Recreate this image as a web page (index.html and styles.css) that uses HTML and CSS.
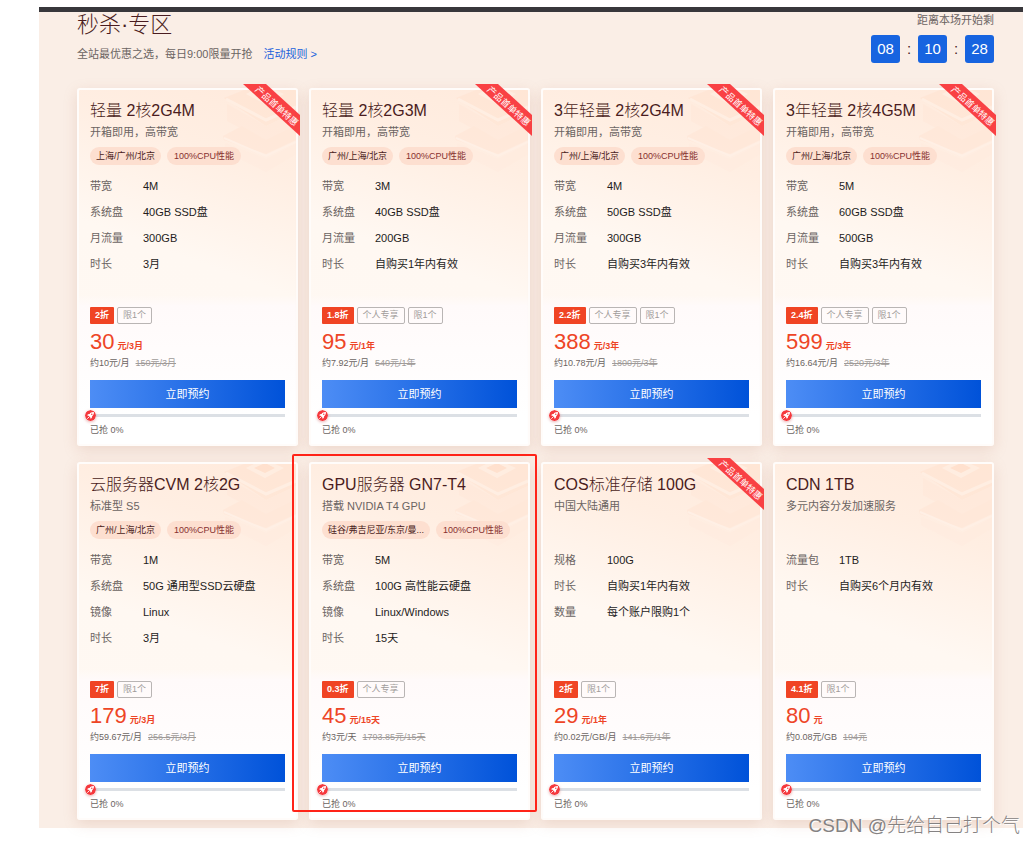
FILE: index.html
```html
<!DOCTYPE html>
<html lang="zh-CN">
<head>
<meta charset="utf-8">
<title>秒杀·专区</title>
<link rel="stylesheet" href="styles.css">
</head>
<body>
<svg class="defs" aria-hidden="true">
  <symbol id="art" viewBox="0 0 74 84">
    <path d="M2 8 22 0h52v22L44 36Z" fill="#ffe3d1"/>
    <path d="M4 9 44 30 74 17" fill="none" stroke="#fff1e6" stroke-width="3"/>
    <path d="M24 4 42-5 62 4 43 14Z" fill="#fff0e4"/>
    <path d="M32 4 43-1 53 4 43 9Z" fill="#ffd9c2"/>
    <path d="M5 14v17l39 21 30-14V22L44 36Z" fill="#ffe8d9"/>
    <path d="M1 46 20 36l24 14 30-15v15L44 64 2 50Z" fill="#ffe5d5"/>
    <path d="M3 53 44 69 74 54v10L44 82 3 61Z" fill="#ffebde" opacity=".7"/>
    <path d="M2 48 44 66 74 52" fill="none" stroke="#fff2e9" stroke-width="2"/>
  </symbol>
  <symbol id="rocket" viewBox="0 0 12 12">
    <circle cx="6" cy="6" r="6" fill="#f5383d"/>
    <path d="M9.7 2.3C7.5 2.1 6 3 5 4.3L3.2 4.6 2.4 6l1.4.2 2 2 .2 1.4 1.4-.8.3-1.8c1.3-1 2.2-2.5 2-4.700Z" fill="#fff"/>
    <path d="m2.500 9.500 1.900-1.900" stroke="#fff" stroke-width="1"/>
    <circle cx="7.400" cy="4.600" r=".8" fill="#f5383d"/>
  </symbol>
  <symbol id="ribbon" viewBox="0 0 57 52">
    <path d="M0 0h23l34 31v21Z" fill="#f94144"/>
    <text class="ribbon-text" transform="translate(33 23) rotate(42)" text-anchor="middle" y="2">产品首单特惠</text>
  </symbol>
</svg>
<main class="zone">
  <header class="head">
    <div>
      <h1>秒杀·专区</h1>
      <p class="intro">全站最优惠之选，每日9:00限量开抢<a href="#rules">活动规则 &gt;</a></p>
    </div>
    <div class="timer">
      <p>距离本场开始剩</p>
      <div class="clock"><b>08</b><i>:</i><b>10</b><i>:</i><b>28</b></div>
    </div>
  </header>

  <section class="grid">
    <article class="card">
      <svg class="art"><use href="#art"/></svg><svg class="ribbon"><use href="#ribbon"/></svg>
      <h2>轻量 2核2G4M</h2><p class="sub">开箱即用，高带宽</p>
      <div class="tags"><span>上海/广州/北京</span><span class="cpu">100%CPU性能</span></div>
      <dl><dt>带宽</dt><dd>4M</dd><dt>系统盘</dt><dd>40GB SSD盘</dd><dt>月流量</dt><dd>300GB</dd><dt>时长</dt><dd>3月</dd></dl>
      <div class="badges"><b>2折</b><span>限1个</span></div>
      <p class="price"><strong>30</strong>元/3月</p>
      <p class="about">约10元/月<del>150元/3月</del></p>
      <button type="button">立即预约</button>
      <div class="bar"><svg><use href="#rocket"/></svg></div><p class="sold">已抢 0%</p>
    </article>

    <article class="card">
      <svg class="art"><use href="#art"/></svg><svg class="ribbon"><use href="#ribbon"/></svg>
      <h2>轻量 2核2G3M</h2><p class="sub">开箱即用，高带宽</p>
      <div class="tags"><span>广州/上海/北京</span><span class="cpu">100%CPU性能</span></div>
      <dl><dt>带宽</dt><dd>3M</dd><dt>系统盘</dt><dd>40GB SSD盘</dd><dt>月流量</dt><dd>200GB</dd><dt>时长</dt><dd>自购买1年内有效</dd></dl>
      <div class="badges"><b>1.8折</b><span>个人专享</span><span>限1个</span></div>
      <p class="price"><strong>95</strong>元/1年</p>
      <p class="about">约7.92元/月<del>540元/1年</del></p>
      <button type="button">立即预约</button>
      <div class="bar"><svg><use href="#rocket"/></svg></div><p class="sold">已抢 0%</p>
    </article>

    <article class="card">
      <svg class="art"><use href="#art"/></svg><svg class="ribbon"><use href="#ribbon"/></svg>
      <h2>3年轻量 2核2G4M</h2><p class="sub">开箱即用，高带宽</p>
      <div class="tags"><span>广州/上海/北京</span><span class="cpu">100%CPU性能</span></div>
      <dl><dt>带宽</dt><dd>4M</dd><dt>系统盘</dt><dd>50GB SSD盘</dd><dt>月流量</dt><dd>300GB</dd><dt>时长</dt><dd>自购买3年内有效</dd></dl>
      <div class="badges"><b>2.2折</b><span>个人专享</span><span>限1个</span></div>
      <p class="price"><strong>388</strong>元/3年</p>
      <p class="about">约10.78元/月<del>1800元/3年</del></p>
      <button type="button">立即预约</button>
      <div class="bar"><svg><use href="#rocket"/></svg></div><p class="sold">已抢 0%</p>
    </article>

    <article class="card">
      <svg class="art"><use href="#art"/></svg><svg class="ribbon"><use href="#ribbon"/></svg>
      <h2>3年轻量 2核4G5M</h2><p class="sub">开箱即用，高带宽</p>
      <div class="tags"><span>广州/上海/北京</span><span class="cpu">100%CPU性能</span></div>
      <dl><dt>带宽</dt><dd>5M</dd><dt>系统盘</dt><dd>60GB SSD盘</dd><dt>月流量</dt><dd>500GB</dd><dt>时长</dt><dd>自购买3年内有效</dd></dl>
      <div class="badges"><b>2.4折</b><span>个人专享</span><span>限1个</span></div>
      <p class="price"><strong>599</strong>元/3年</p>
      <p class="about">约16.64元/月<del>2520元/3年</del></p>
      <button type="button">立即预约</button>
      <div class="bar"><svg><use href="#rocket"/></svg></div><p class="sold">已抢 0%</p>
    </article>

    <article class="card">
      <svg class="art"><use href="#art"/></svg>
      <h2>云服务器CVM 2核2G</h2><p class="sub">标准型 S5</p>
      <div class="tags"><span>广州/上海/北京</span><span class="cpu">100%CPU性能</span></div>
      <dl><dt>带宽</dt><dd>1M</dd><dt>系统盘</dt><dd>50G 通用型SSD云硬盘</dd><dt>镜像</dt><dd>Linux</dd><dt>时长</dt><dd>3月</dd></dl>
      <div class="badges"><b>7折</b><span>限1个</span></div>
      <p class="price"><strong>179</strong>元/3月</p>
      <p class="about">约59.67元/月<del>256.5元/3月</del></p>
      <button type="button">立即预约</button>
      <div class="bar"><svg><use href="#rocket"/></svg></div><p class="sold">已抢 0%</p>
    </article>

    <article class="card marked">
      <svg class="art"><use href="#art"/></svg>
      <h2>GPU服务器 GN7-T4</h2><p class="sub">搭载 NVIDIA T4 GPU</p>
      <div class="tags"><span>硅谷/弗吉尼亚/东京/曼...</span><span class="cpu">100%CPU性能</span></div>
      <dl><dt>带宽</dt><dd>5M</dd><dt>系统盘</dt><dd>100G 高性能云硬盘</dd><dt>镜像</dt><dd>Linux/Windows</dd><dt>时长</dt><dd>15天</dd></dl>
      <div class="badges"><b>0.3折</b><span>个人专享</span></div>
      <p class="price"><strong>45</strong>元/15天</p>
      <p class="about">约3元/天<del>1793.85元/15天</del></p>
      <button type="button">立即预约</button>
      <div class="bar"><svg><use href="#rocket"/></svg></div><p class="sold">已抢 0%</p>
    </article>

    <article class="card">
      <svg class="art"><use href="#art"/></svg><svg class="ribbon"><use href="#ribbon"/></svg>
      <h2>COS标准存储 100G</h2><p class="sub">中国大陆通用</p>
      <div class="tags"></div>
      <dl><dt>规格</dt><dd>100G</dd><dt>时长</dt><dd>自购买1年内有效</dd><dt>数量</dt><dd>每个账户限购1个</dd></dl>
      <div class="badges"><b>2折</b><span>限1个</span></div>
      <p class="price"><strong>29</strong>元/1年</p>
      <p class="about">约0.02元/GB/月<del>141.6元/1年</del></p>
      <button type="button">立即预约</button>
      <div class="bar"><svg><use href="#rocket"/></svg></div><p class="sold">已抢 0%</p>
    </article>

    <article class="card">
      <svg class="art"><use href="#art"/></svg>
      <h2>CDN 1TB</h2><p class="sub">多元内容分发加速服务</p>
      <div class="tags"></div>
      <dl><dt>流量包</dt><dd>1TB</dd><dt>时长</dt><dd>自购买6个月内有效</dd></dl>
      <div class="badges"><b>4.1折</b><span>限1个</span></div>
      <p class="price"><strong>80</strong>元</p>
      <p class="about">约0.08元/GB<del>194元</del></p>
      <button type="button">立即预约</button>
      <div class="bar"><svg><use href="#rocket"/></svg></div><p class="sold">已抢 0%</p>
    </article>
  </section>
  <div class="watermark">CSDN @先给自己打个气</div>
</main>
</body>
</html>
```
FILE: styles.css
```css
* { box-sizing: border-box; }
body {
  margin: 0;
  padding: 7px 12px 15px 39px;
  background: #fff;
  font: 11px/16px "Liberation Sans", "Noto Sans CJK SC", sans-serif;
  color: #6b6462;
}
h1, h2, p, dl, dd { margin: 0; }
.defs { position: absolute; top: 0; left: 0; width: 0; height: 0; }
.zone {
  position: relative;
  padding: 0 29px 8px 38px;
  border-top: 5px solid #38373b;
  background: #faeee6;
}
.head { display: flex; justify-content: space-between; height: 76px; }
h1 { font-size: 22px; line-height: 26px; font-weight: 300; color: #4a1c20; }
.intro { margin-top: 8px; }
.intro a { margin-left: 11px; color: #1a5fdc; text-decoration: none; }
.timer { text-align: right; }
.clock { display: flex; justify-content: flex-end; align-items: center; margin-top: 7px; }
.clock b {
  width: 29px;
  border-radius: 3px;
  background: #1764e0;
  color: #fff;
  font-size: 15px;
  font-weight: 400;
  line-height: 28px;
  text-align: center;
}
.clock i { width: 18px; color: #4a1c20; font-size: 15px; font-style: normal; text-align: center; }
.grid { display: grid; grid-template-columns: repeat(4, 1fr); gap: 16px 11px; }
.card {
  position: relative;
  padding: 10px 11px 6px;
  border: 2px solid #fffcfa;
  border-radius: 3px;
  background: linear-gradient(to bottom, transparent 58%, #fffafa 61%, #fff 92%),
    linear-gradient(200deg, #ffeadc 0%, #ffeee2 20%, #fff8f2 48%, #fff9f3 100%);
  box-shadow: 0 4px 14px rgba(190, 130, 110, .22);
}
.card > * { position: relative; }
.card .art { position: absolute; top: 0; right: 0; width: 74px; height: 84px; opacity: .55; }
.card .ribbon { position: absolute; top: -6px; right: -4px; width: 57px; height: 52px; }
.ribbon-text { font-size: 9px; fill: #fff; }
h2 { font-size: 16px; line-height: 22px; font-weight: 300; color: #4a1c20; white-space: nowrap; }
.sub { line-height: 20px; }
.tags { display: flex; justify-content: flex-start; gap: 6px; height: 18px; margin-top: 5px; }
.tags span {
  padding: 0 6px;
  border-radius: 9px;
  background: #fddfd0;
  color: #4a1c20;
  font-size: 9px;
  line-height: 18px;
  white-space: nowrap;
}
.tags .cpu { padding: 0 7px; color: #87302f; }
dl {
  display: grid;
  grid-template-columns: 53px 1fr;
  grid-auto-rows: 26px;
  min-height: 104px;
  margin: 8px 0 30px;
  line-height: 26px;
}
dd { color: #241c1c; white-space: nowrap; }
.badges { display: flex; gap: 3px; height: 17px; font-size: 9px; }
.badges b { padding: 0 5px; border-radius: 1px; background: #f04424; color: #fff; line-height: 17px; }
.badges span { padding: 0 5px; border: 1px solid #b9b5b4; border-radius: 2px; color: #a19c9a; line-height: 15px; }
.price {
  display: flex;
  align-items: baseline;
  height: 24px;
  margin-top: 6px;
  color: #ee4526;
  font-size: 9px;
  font-weight: 700;
  line-height: 12px;
}
.price strong { margin-right: 3px; font-size: 22px; font-weight: 400; line-height: 24px; }
.about { margin-top: 1px; font-size: 9px; white-space: nowrap; }
.about del { margin-left: 6px; color: #a09b99; }
button {
  display: block;
  width: 100%;
  height: 28px;
  margin-top: 9px;
  padding: 0;
  border: 0;
  background: linear-gradient(90deg, #4d8df5, #0052d9);
  color: #fff;
  font: inherit;
}
.bar { height: 3px; margin-top: 6px; background: #dce0e5; }
.bar svg {
  position: absolute;
  top: -4px;
  left: -5px;
  width: 11px;
  height: 11px;
  border-radius: 50%;
  box-shadow: 0 1px 3px rgba(200, 60, 60, .4);
}
.sold { margin-top: 5px; font-size: 9px; }
.marked { z-index: 1; }
.marked::after {
  content: "";
  position: absolute;
  inset: -10px -9px 6px -19px;
  border: 2px solid #ff2318;
  border-radius: 2px;
  pointer-events: none;
}
.watermark {
  position: absolute;
  right: 3px;
  bottom: -10px;
  z-index: 2;
  color: #858282;
  font-size: 19px;
  font-weight: 300;
  line-height: 24px;
  text-shadow: 1px 1px 0 #fff;
}
```
